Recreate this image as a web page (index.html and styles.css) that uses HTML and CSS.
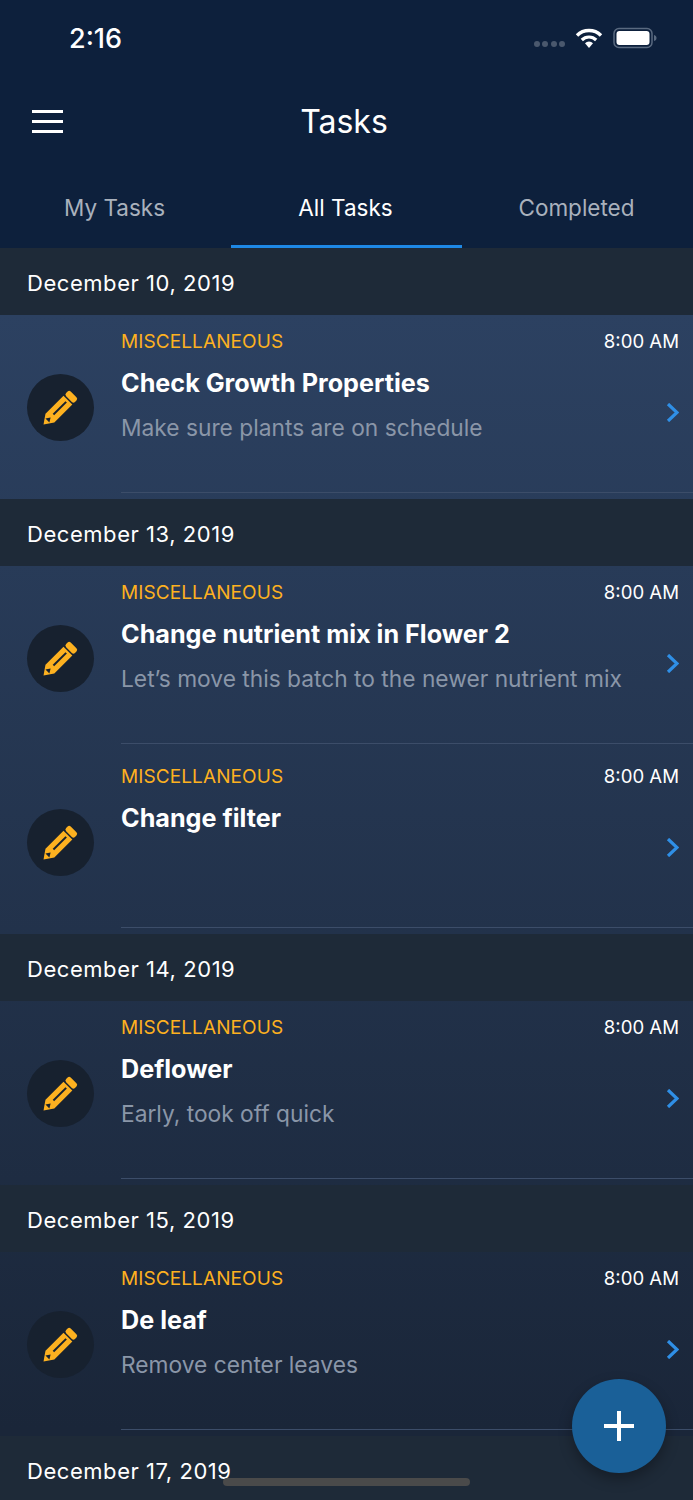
FILE: index.html
```html
<!DOCTYPE html>
<html lang="en">
<head>
  <meta charset="UTF-8" />
  <meta name="viewport" content="width=device-width, initial-scale=1.0"/>
  <title>Tasks</title>
  <link rel="stylesheet" href="styles.css">
</head>
<body>
  <svg class="defs" width="0" height="0">
    <symbol id="pencil" viewBox="0 0 67 67">
      <g transform="rotate(45 33.5 33.5)">
        <rect x="27.250" y="15" width="12.500" height="6.500" rx="2.200" fill="#fdb120"/>
        <path d="M27.250 23h12.500v25.500l-6.250 9-6.250-9z" fill="#fdb120"/>
        <rect x="32.500" y="25.500" width="2" height="18" fill="#17212f"/>
        <path d="M33.500 47.500l2.800 4.500h-5.600z" fill="#17212f"/>
      </g>
    </symbol>
    <symbol id="chevron" viewBox="0 0 13 19">
      <path d="M2 1l9 8.500-9 8.500" fill="none" stroke="#2f8fe6" stroke-width="3.200"/>
    </symbol>
  </svg>

  <div class="phone">
    <div class="top">
      <div class="status-bar">
        <span class="time">2:16</span>
        <div class="status-icons">
          <div class="signal"><i></i><i></i><i></i><i></i></div>
          <svg class="wifi" width="28" height="22" viewBox="0 0 28 22">
            <path d="M2 8.500a17 17 0 0 1 24 0" fill="none" stroke="#fff" stroke-width="3.400"/>
            <path d="M6.800 13a10.200 10.200 0 0 1 14.400 0" fill="none" stroke="#fff" stroke-width="3.200"/>
            <path d="M10 16.200a5.600 5.600 0 0 1 8 0L14 21z" fill="#fff"/>
          </svg>
          <svg class="battery" width="44" height="22" viewBox="0 0 44 22">
            <rect x="1" y="1.500" width="38" height="19" rx="5" fill="none" stroke="#5a6a80" stroke-width="1.500"/>
            <rect x="3.500" y="4" width="33" height="14" rx="3" fill="#fff"/>
            <path d="M41 8c1.800.5 2.500 1.500 2.500 3s-.7 2.500-2.500 3z" fill="#5a6a80"/>
          </svg>
        </div>
      </div>
      <div class="title-bar">
        <div class="menu-btn"><i></i><i></i><i></i></div>
        <h1>Tasks</h1>
      </div>
      <div class="tabs">
        <div class="tab">My Tasks</div>
        <div class="tab active">All Tasks</div>
        <div class="tab">Completed</div>
      </div>
    </div>

    <div class="list">
      <div class="date">December 10, 2019</div>
      <div class="row">
        <div class="icon"><svg width="67" height="67"><use href="#pencil"/></svg></div>
        <div class="row-body">
          <span class="cat">MISCELLANEOUS</span>
          <span class="at">8:00 AM</span>
          <span class="name">Check Growth Properties</span>
          <span class="note">Make sure plants are on schedule</span>
          <svg class="chev" width="13" height="19"><use href="#chevron"/></svg>
        </div>
      </div>

      <div class="date">December 13, 2019</div>
      <div class="row">
        <div class="icon"><svg width="67" height="67"><use href="#pencil"/></svg></div>
        <div class="row-body">
          <span class="cat">MISCELLANEOUS</span>
          <span class="at">8:00 AM</span>
          <span class="name">Change nutrient mix in Flower 2</span>
          <span class="note">Let’s move this batch to the newer nutrient mix</span>
          <svg class="chev" width="13" height="19"><use href="#chevron"/></svg>
        </div>
      </div>
      <div class="row">
        <div class="icon"><svg width="67" height="67"><use href="#pencil"/></svg></div>
        <div class="row-body">
          <span class="cat">MISCELLANEOUS</span>
          <span class="at">8:00 AM</span>
          <span class="name">Change filter</span>
          <svg class="chev" width="13" height="19"><use href="#chevron"/></svg>
        </div>
      </div>

      <div class="date">December 14, 2019</div>
      <div class="row">
        <div class="icon"><svg width="67" height="67"><use href="#pencil"/></svg></div>
        <div class="row-body">
          <span class="cat">MISCELLANEOUS</span>
          <span class="at">8:00 AM</span>
          <span class="name">Deflower</span>
          <span class="note">Early, took off quick</span>
          <svg class="chev" width="13" height="19"><use href="#chevron"/></svg>
        </div>
      </div>

      <div class="date">December 15, 2019</div>
      <div class="row">
        <div class="icon"><svg width="67" height="67"><use href="#pencil"/></svg></div>
        <div class="row-body">
          <span class="cat">MISCELLANEOUS</span>
          <span class="at">8:00 AM</span>
          <span class="name">De leaf</span>
          <span class="note">Remove center leaves</span>
          <svg class="chev" width="13" height="19"><use href="#chevron"/></svg>
        </div>
      </div>

      <div class="date">December 17, 2019</div>
    </div>

    <button class="fab">
      <svg width="30" height="30" viewBox="0 0 30 30"><path d="M15 0v30M0 15h30" stroke="#fff" stroke-width="4"/></svg>
    </button>
    <div class="home-bar"></div>
  </div>
</body>
</html>
```

FILE: styles.css
```css
:root {
  --navy: #0d203c;
  --date-bg: #1e2a38;
  --yellow: #fdb120;
  --blue: #1e88e5;
}

html, body {
  margin: 0;
  padding: 0;
}

body {
  font-family: Inter, "Liberation Sans", sans-serif;
  background-color: var(--date-bg);
  color: #fff;
}

.defs {
  display: block;
  height: 0;
}

.phone {
  position: relative;
  width: 693px;
  height: 1500px;
  overflow: hidden;
}

.top {
  height: 248px;
  background-color: var(--navy);
}

.status-bar {
  height: 76px;
  display: flex;
  justify-content: space-between;
  align-items: center;
  padding: 0 36px 0 69px;
}

.time {
  font-size: 27px;
  font-weight: 500;
}

.status-icons {
  display: flex;
  align-items: center;
}

.signal {
  display: flex;
  gap: 2.300px;
  margin: 12px 10px 0 0;
}

.signal i {
  width: 6px;
  height: 6px;
  border-radius: 50%;
  background-color: #4a586d;
}

.wifi {
  margin-right: 10px;
}

.title-bar {
  height: 90px;
  display: flex;
  align-items: center;
  justify-content: center;
  position: relative;
  padding-right: 5px;
}

.title-bar h1 {
  margin: 0;
  font-size: 32px;
  font-weight: 400;
}

.menu-btn {
  position: absolute;
  left: 32px;
  top: 34px;
  width: 31px;
  display: flex;
  flex-direction: column;
  gap: 7px;
}

.menu-btn i {
  height: 3px;
  background-color: #fff;
}

.tabs {
  height: 82px;
  display: grid;
  grid-template-columns: 231px 231px 231px;
}

.tab {
  display: flex;
  align-items: center;
  justify-content: center;
  padding: 3px 2px 0 0;
  font-size: 22.500px;
  color: #a9b1bc;
  border-bottom: 3px solid transparent;
  box-sizing: border-box;
}

.tab.active {
  color: #fff;
  border-bottom-color: var(--blue);
}

.list {
  background: linear-gradient(#2c4161 67px, #1a2639 1180px);
}

.date {
  height: 67px;
  display: flex;
  align-items: center;
  box-sizing: border-box;
  padding: 2px 0 0 27px;
  font-size: 22px;
  letter-spacing: 0.550px;
  background-color: var(--date-bg);
}

.row {
  height: 184px;
  display: flex;
  align-items: center;
  padding-left: 27px;
  box-sizing: border-box;
}

.icon {
  flex: none;
  width: 67px;
  height: 67px;
  margin-right: 27px;
  border-radius: 50%;
  background-color: #17212f;
}

.row-body {
  flex: 1;
  min-width: 0;
  align-self: flex-start;
  height: 178px;
  box-sizing: border-box;
  padding: 12px 14px 0 0;
  border-bottom: 1px solid #3c4d69;
  display: grid;
  grid-template-columns: 1fr auto;
  grid-template-rows: 28px 56px 32px;
  align-items: center;
}

.cat {
  font-size: 19px;
  letter-spacing: 0.100px;
  color: var(--yellow);
}

.at {
  font-size: 18.600px;
  text-align: right;
}

.name {
  grid-column: 1;
  grid-row: 2;
  font-size: 25.200px;
  font-weight: 700;
  white-space: nowrap;
}

.note {
  grid-column: 1 / 3;
  grid-row: 3;
  font-size: 22.750px;
  color: #8a96a8;
  white-space: nowrap;
}

.chev {
  grid-column: 2;
  grid-row: 2 / 4;
  justify-self: end;
  align-self: start;
  margin-top: 48px;
}

.fab {
  position: absolute;
  left: 572px;
  top: 1379px;
  width: 94px;
  height: 94px;
  padding: 0;
  border: 0;
  border-radius: 50%;
  background-color: #1a6098;
  box-shadow: 0 6px 14px rgba(0, 0, 0, 0.3);
  display: flex;
  align-items: center;
  justify-content: center;
}

.home-bar {
  position: absolute;
  left: 223px;
  top: 1478px;
  width: 247px;
  height: 8px;
  border-radius: 4px;
  background-color: #4a4a4a;
}
```
